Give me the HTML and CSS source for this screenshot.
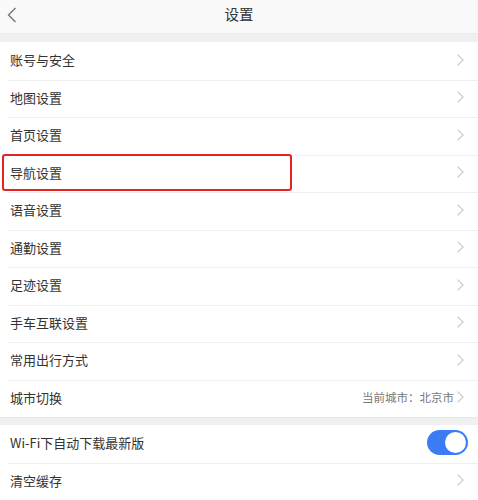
FILE: index.html
```html
<!DOCTYPE html>
<html lang="zh">
<head>
<meta charset="utf-8">
<link rel="stylesheet" href="styles.css">
</head>
<body>
<header class="topbar">
  <svg class="back" width="10" height="16" viewBox="0 0 10 16"><path d="M8.5 1 L1.5 8 L8.5 15" fill="none" stroke="#777" stroke-width="1.4"/></svg>
  <div class="title">设置</div>
</header>
<div class="gap"></div>
<ul class="group">
  <li class="row"><span class="label">账号与安全</span><span class="chev"></span></li>
  <li class="row"><span class="label">地图设置</span><span class="chev"></span></li>
  <li class="row"><span class="label">首页设置</span><span class="chev"></span></li>
  <li class="row"><span class="label">导航设置</span><span class="chev"></span><span class="mark"></span></li>
  <li class="row"><span class="label">语音设置</span><span class="chev"></span></li>
  <li class="row"><span class="label">通勤设置</span><span class="chev"></span></li>
  <li class="row"><span class="label">足迹设置</span><span class="chev"></span></li>
  <li class="row"><span class="label">手车互联设置</span><span class="chev"></span></li>
  <li class="row"><span class="label">常用出行方式</span><span class="chev"></span></li>
  <li class="row"><span class="label">城市切换</span><span class="value">当前城市：北京市</span><span class="chev"></span></li>
</ul>
<div class="gap small"></div>
<ul class="group">
  <li class="row"><span class="label">Wi-Fi下自动下载最新版</span><span class="toggle"><span class="knob"></span></span></li>
  <li class="row"><span class="label">清空缓存</span><span class="chev"></span></li>
</ul>
</body>
</html>
```
FILE: styles.css
```css
* { box-sizing: border-box; }
html, body { margin: 0; padding: 0; }
body {
  width: 478px;
  height: 500px;
  overflow: hidden;
  background: #f2f2f2;
  font-family: "Noto Sans CJK SC", "Noto Sans", sans-serif;
  color: #333;
}
.topbar {
  position: relative;
  height: 34px;
  background: #f9f9f9;
  border-bottom: 1px solid #ececec;
  display: flex;
  align-items: center;
  justify-content: center;
}
.back { position: absolute; left: 7px; top: 7px; }
.title { font-size: 14.5px; color: #333; line-height: 1; margin-top: -4px; }
.gap { height: 8px; background: #f0f0f0; }
.gap.small { height: 8px; border-top: 1px solid #e8e8e8; }
.group { list-style: none; margin: 0; padding: 0; background: #fff; }
.row {
  position: relative;
  height: 37.5px;
  display: flex;
  align-items: center;
  padding: 0 10px 2px;
  font-size: 13px;
}
.row + .row::before {
  content: "";
  position: absolute;
  left: 8px; right: 0; top: 0;
  border-top: 1px solid #efefef;
}
.label { flex: 1; }
.value { font-size: 11.5px; color: #777; margin-right: 0; }
.chev {
  width: 8px; height: 8px;
  border-top: 1.2px solid #c4c4c4;
  border-right: 1.2px solid #c4c4c4;
  transform: rotate(45deg);
  margin-right: 6px;
}
.mark {
  position: absolute;
  z-index: 2;
  left: 2px; top: -1px;
  width: 290px; height: 37px;
  border: 2.5px solid #e5231f;
  border-radius: 3px;
}
.toggle {
  width: 41px; height: 25px;
  border-radius: 13px;
  background: #3b7cf4;
  position: relative;
}
.knob {
  position: absolute;
  right: 2px; top: 2px;
  width: 21px; height: 21px;
  border-radius: 50%;
  background: #fff;
}
```
